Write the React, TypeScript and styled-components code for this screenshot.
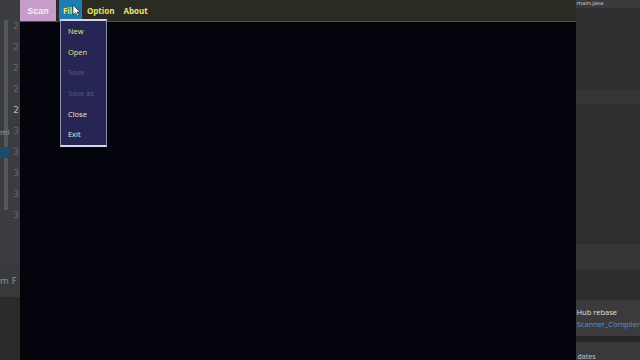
import styled, { createGlobalStyle } from "styled-components";

const GlobalStyle = createGlobalStyle`
  html, body {
    margin: 0;
    padding: 0;
    background: #2f2f31;
    overflow: hidden;
  }
  body {
    font-family: "Open Sans", "Liberation Sans", sans-serif;
  }
`;

const Screen = styled.div`
  display: flex;
  width: 640px;
  height: 360px;
  overflow: hidden;
`;

// IDE left gutter peeking out behind the app window
const Gutter = styled.div`
  width: 20px;
  display: flex;
  flex-direction: column;
  background: #3b3c3f;
`;

const GutterTop = styled.div`
  flex: 0 0 265px;
  display: flex;
  position: relative;
`;

const ScrollTrack = styled.div`
  width: 4px;
  margin: 20px 0 55px 4px;
  background: #56575a;
`;

const LineNumbers = styled.div`
  flex: 1;
  display: flex;
  flex-direction: column;
  align-items: flex-end;
  padding: 21px 1px 0 0;
  gap: 10px;
  font-family: "DejaVu Sans", sans-serif;
  font-size: 9px;
  line-height: 11px;
  color: #6a6b6e;
`;

const LineNo = styled.span<{ $bright?: boolean }>`
  color: ${(p) => (p.$bright ? "#b8b8b8" : "#66676a")};
`;

const GutterMark = styled.div`
  position: absolute;
  left: 0;
  top: 147px;
  width: 9px;
  height: 11px;
  background: #1d4b6e;
`;

const GutterLabel = styled.span`
  position: absolute;
  left: 0;
  top: 126px;
  font-size: 8px;
  color: #9a9a9a;
`;

const GutterMid = styled.div`
  flex: 0 0 32px;
  background: #38393b;
  display: flex;
  align-items: center;
  font-family: "DejaVu Sans", sans-serif;
  font-size: 9px;
  color: #8e8e8e;
  white-space: nowrap;
  overflow: hidden;
`;

const GutterBottom = styled.div`
  flex: 1;
  background: #2d2b2a;
`;

// The scanner app window
const Window = styled.div`
  width: 558px;
  display: flex;
  flex-direction: column;
  background: #04040d;
  position: relative;
`;

const MenuBar = styled.div`
  height: 21px;
  display: flex;
  align-items: stretch;
  background: #2c2b23;
  border-bottom: 1px solid #57532e;
`;

const ScanButton = styled.div`
  width: 36px;
  display: flex;
  align-items: center;
  justify-content: center;
  background: #c69ccb;
  color: #f4ecf6;
  font-family: "Liberation Sans", sans-serif;
  font-size: 9px;
  font-weight: bold;
  font-style: italic;
`;

const MenuItem = styled.div<{ $active?: boolean }>`
  display: flex;
  align-items: center;
  padding: 0 ${(p) => (p.$active ? "5px" : "4px")} 0 ${(p) => (p.$active ? "4px" : "5px")};
  margin-left: ${(p) => (p.$active ? "3px" : "0")};
  background: ${(p) => (p.$active ? "#1f7db3" : "transparent")};
  color: #e9e36a;
  font-family: "Open Sans", "Liberation Sans", sans-serif;
  font-size: 8px;
  font-weight: 700;
`;

const Body = styled.div`
  flex: 1;
  background: #04040d;
`;

const Dropdown = styled.div`
  position: absolute;
  left: 40px;
  top: 19px;
  width: 47px;
  height: 128px;
  display: flex;
  flex-direction: column;
  background: #262553;
  border: 1px solid #8e8eaa;
  border-top: 2px solid #d8d8e4;
  border-bottom: 2px solid #d8d8e4;
  box-sizing: border-box;
`;

const DropItem = styled.div<{ $tone: "yellow" | "white" | "off" }>`
  flex: 0 0 20.6px;
  display: flex;
  align-items: center;
  padding-left: 7px;
  font-family: "Open Sans", "Liberation Sans", sans-serif;
  font-size: 7.5px;
  color: ${(p) =>
    p.$tone === "yellow" ? "#e8e585" : p.$tone === "white" ? "#ececd8" : "#5d5c74"};
`;

const Cursor = styled.svg`
  position: absolute;
  left: 52px;
  top: 4px;
`;

// IDE panel on the right
const SidePanel = styled.div`
  flex: 1;
  display: flex;
  flex-direction: column;
  background: #2f2f31;
`;

const SideTitle = styled.div`
  height: 8px;
  padding-left: 1px;
  background: #3a3a3c;
  font-size: 6px;
  line-height: 6px;
  color: #c8c8c8;
  overflow: hidden;
`;

const Band = styled.div<{ $h: number; $c: string }>`
  height: ${(p) => p.$h}px;
  background: ${(p) => p.$c};
`;

const GitBox = styled.div`
  height: 36px;
  display: flex;
  flex-direction: column;
  justify-content: center;
  gap: 2px;
  background: #3b3b3e;
  padding-left: 1px;
  font-family: "Open Sans", "Liberation Sans", sans-serif;
  font-size: 7.5px;
  white-space: nowrap;
  overflow: hidden;
`;

const GitLine = styled.span<{ $link?: boolean }>`
  color: ${(p) => (p.$link ? "#5b8fd6" : "#e0e0e0")};
`;

const SideFooter = styled.div`
  flex: 1;
  display: flex;
  align-items: flex-end;
  padding-left: 2px;
  background: #39393b;
  font-size: 7px;
  line-height: 6px;
  color: #c8c8c8;
  overflow: hidden;
`;

const menuEntries: { label: string; tone: "yellow" | "white" | "off" }[] = [
  { label: "New", tone: "yellow" },
  { label: "Open", tone: "yellow" },
  { label: "Save", tone: "off" },
  { label: "Save as", tone: "off" },
  { label: "Close", tone: "white" },
  { label: "Exit", tone: "white" },
];

const lineNumbers = ["2", "2", "2", "2", "2", "3", "3", "3", "3", "3"];

const App = () => {
  return (
    <>
      <GlobalStyle />
      <Screen>
        <Gutter>
          <GutterTop>
            <ScrollTrack />
            <LineNumbers>
              {lineNumbers.map((n, i) => (
                <LineNo key={i} $bright={i === 4}>
                  {n}
                </LineNo>
              ))}
            </LineNumbers>
            <GutterMark />
            <GutterLabel>ml</GutterLabel>
          </GutterTop>
          <GutterMid>m F</GutterMid>
          <GutterBottom />
        </Gutter>

        <Window>
          <MenuBar>
            <ScanButton>Scan</ScanButton>
            <MenuItem $active>File</MenuItem>
            <MenuItem>Option</MenuItem>
            <MenuItem>About</MenuItem>
          </MenuBar>
          <Body />
          <Dropdown>
            {menuEntries.map((m) => (
              <DropItem key={m.label} $tone={m.tone}>
                {m.label}
              </DropItem>
            ))}
          </Dropdown>
          <Cursor width="9" height="13" viewBox="0 0 9 13">
            <path d="M1 1 L1 11 L3.5 8.6 L5.3 12.2 L6.8 11.5 L5 8 L8 8 Z" fill="#ffffff" stroke="#222" strokeWidth="0.7" />
          </Cursor>
        </Window>

        <SidePanel>
          <SideTitle>main.java</SideTitle>
          <Band $h={82} $c="#303032" />
          <Band $h={14} $c="#353537" />
          <Band $h={140} $c="#2f2f31" />
          <Band $h={26} $c="#353537" />
          <Band $h={30} $c="#2d2d2f" />
          <GitBox>
            <GitLine>Hub rebase</GitLine>
            <GitLine $link>Scanner_Compiler</GitLine>
          </GitBox>
          <Band $h={6} $c="#262628" />
          <SideFooter>dates</SideFooter>
        </SidePanel>
      </Screen>
    </>
  );
};

export default App;
